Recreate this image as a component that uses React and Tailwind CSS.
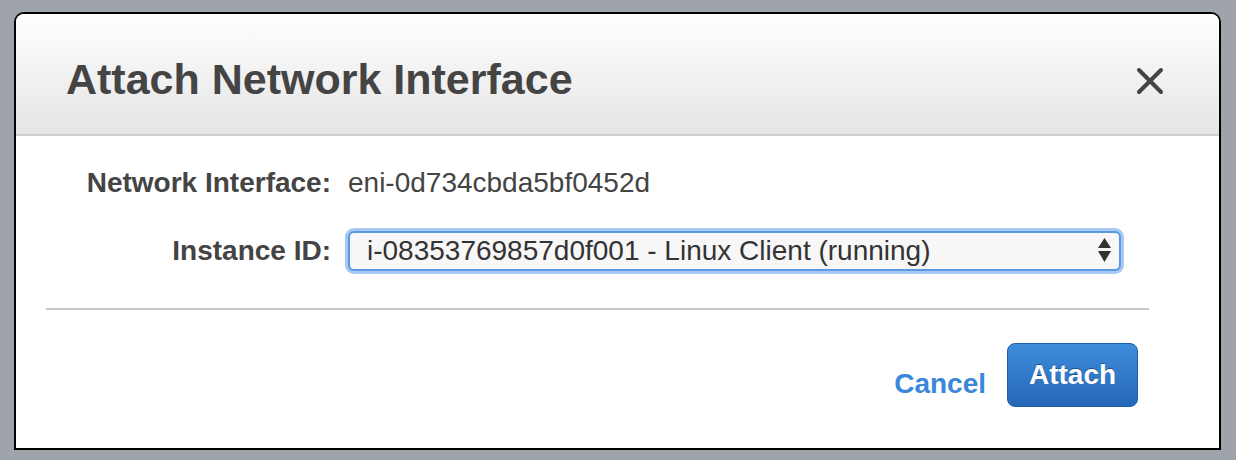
import React from "react";

export default function App() {
  return (
    <div
      className="w-[1236px] h-[460px] bg-[#9fa3aa] pt-[12px] pl-[14px]"
      style={{ fontFamily: '"Liberation Sans", Arial, Helvetica, sans-serif' }}
    >
      <div className="w-[1207px] h-[438px] border-2 border-black rounded-t-[10px] bg-white overflow-hidden flex flex-col">
        {/* Header */}
        <div className="h-[122px] shrink-0 flex items-start justify-between bg-gradient-to-b from-white to-[#e5e5e5] border-b-2 border-[#cfcfcf] pl-[50px] pr-[55px]">
          <h1 className="mt-[40px] text-[43px] leading-[50px] font-bold text-[#444444]">
            Attach Network Interface
          </h1>
          <svg
            className="mt-[53px]"
            width="28"
            height="28"
            viewBox="0 0 28 28"
            fill="none"
            stroke="#444444"
            strokeWidth="4"
            strokeLinecap="round"
          >
            <line x1="3" y1="3" x2="25" y2="25" />
            <line x1="25" y1="3" x2="3" y2="25" />
          </svg>
        </div>

        {/* Body */}
        <div className="flex flex-col pt-[31px]">
          <div className="flex items-center gap-[17px] text-[28px] leading-[32px]">
            <div className="w-[315px] text-right font-bold text-[#444444]">Network Interface:</div>
            <div className="text-[#444444]">eni-0d734cbda5bf0452d</div>
          </div>
          <div className="flex items-center gap-[17px] mt-[32px] text-[28px] leading-[32px]">
            <div className="w-[315px] text-right font-bold text-[#444444]">Instance ID:</div>
            <div className="w-[773px] h-[40px] rounded-[6px] border-2 border-[#5b98df] bg-[#f7f7f7] shadow-[0_0_0_3px_#a5c8f4] flex items-center justify-between pl-[17px] pr-[8px]">
              <span className="text-[#333333]">i-08353769857d0f001 - Linux Client (running)</span>
              <svg width="13" height="26" viewBox="0 0 13 26" fill="#333333">
                <polygon points="6.5,0 13,10 0,10" />
                <polygon points="0,13 13,13 6.5,24" />
              </svg>
            </div>
          </div>
          <div className="mt-[37px] ml-[30px] mr-[70px] h-[2px] bg-[#c8c8c8]" />
          <div className="mt-[33px] flex items-start justify-end pr-[81px]">
            <span className="mt-[25px] text-[28px] leading-[32px] font-bold text-[#3b87d9]">Cancel</span>
            <button className="ml-[21px] w-[131px] h-[64px] rounded-[8px] border border-[#1f5eaa] bg-gradient-to-b from-[#3f8ddb] to-[#2566b9] text-white font-bold text-[28px] leading-[32px] [text-shadow:0_-1px_0_rgba(0,0,0,0.35)]">
              Attach
            </button>
          </div>
        </div>
      </div>
    </div>
  );
}
